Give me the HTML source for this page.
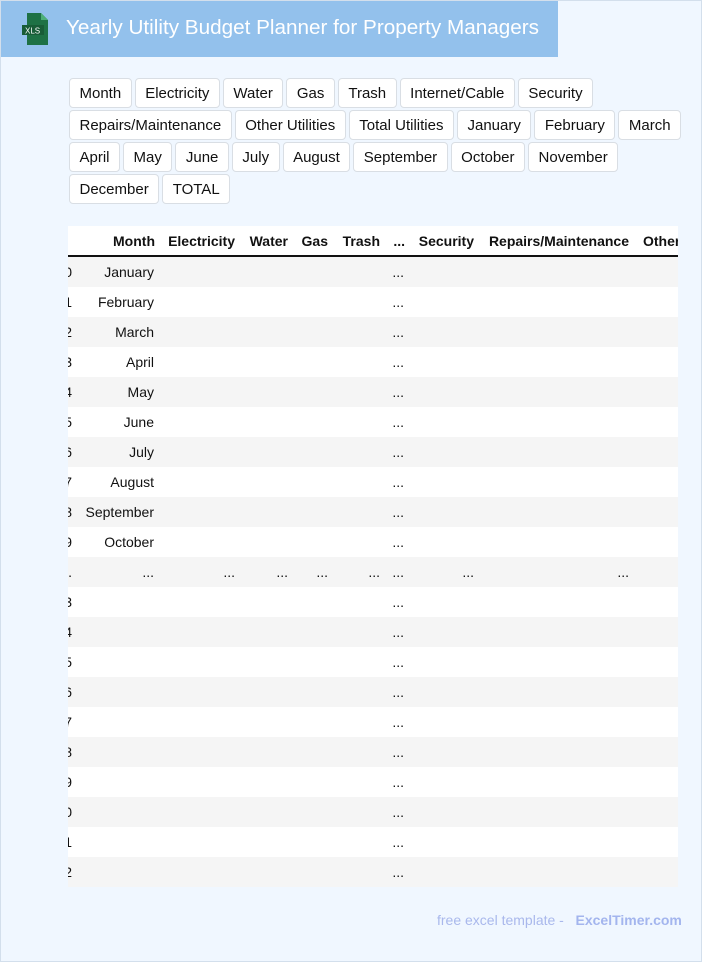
<!DOCTYPE html>
<html><head><meta charset="utf-8"><style>
*{box-sizing:border-box;margin:0;padding:0}
body{width:702px;height:962px;background:#f0f7ff;font-family:"Liberation Sans",Arial,sans-serif;position:relative;overflow:hidden}
.bd{position:absolute;left:0;top:0;width:702px;height:962px;border:1px solid #d3dfec;pointer-events:none}
.hdr{position:absolute;left:0;top:0;width:558px;height:57px;background:#93c1ec}
.hdr h1{position:absolute;left:66px;top:16px;font-size:20.7px;font-weight:normal;color:#fff;white-space:nowrap}
.pills{position:absolute;left:69px;top:78px;width:620px;display:flex;flex-wrap:wrap;gap:2px 3px}
.pill{height:30px;line-height:29px;padding:0 9.5px;border:1px solid #d9dee4;border-radius:4px;background:#fff;font-size:15px;color:#111}
.tbl{position:absolute;left:68px;top:226px;width:610px;height:661px;overflow:hidden;background:#fff}
.row{position:absolute;left:0;width:610px;height:30px;font-size:14px;color:#111}
.row span{position:absolute;top:7px;white-space:nowrap}
.g{background:#f5f5f5}
.h{top:0;height:31px;border-bottom:2px solid #111;font-weight:bold;background:#fff}
.h span{top:7px}
</style></head><body>
<div class="hdr">
<svg style="position:absolute;left:22px;top:13px" width="28" height="32" viewBox="0 0 28 32"><path d="M5 0h14l7 7v25H5z" fill="#1e7145"/><path d="M19 0v7h7z" fill="#4caf78"/><rect x="0" y="12" width="22" height="10" fill="#185c37"/><text x="3" y="20.5" font-size="8" fill="#fff" font-family="Liberation Sans">XLS</text></svg>
<h1>Yearly Utility Budget Planner for Property Managers</h1></div>
<div class="pills">
<div class="pill">Month</div><div class="pill">Electricity</div><div class="pill">Water</div><div class="pill">Gas</div><div class="pill">Trash</div><div class="pill">Internet/Cable</div><div class="pill">Security</div><div class="pill">Repairs/Maintenance</div><div class="pill">Other Utilities</div><div class="pill">Total Utilities</div><div class="pill">January</div><div class="pill">February</div><div class="pill">March</div><div class="pill">April</div><div class="pill">May</div><div class="pill">June</div><div class="pill">July</div><div class="pill">August</div><div class="pill">September</div><div class="pill">October</div><div class="pill">November</div><div class="pill">December</div><div class="pill">TOTAL</div>
</div>
<div class="tbl" id="t">
<div class="row h"><span style="right:523px">Month</span><span style="right:443px">Electricity</span><span style="right:390px">Water</span><span style="right:350px">Gas</span><span style="right:298px">Trash</span><span style="right:273px">...</span><span style="right:204px">Security</span><span style="right:49px">Repairs/Maintenance</span><span style="left:575px">Other Utilities</span></div>
<div class="row g" style="top:31px"><span style="right:606px">0</span><span style="right:524px">January</span><span style="right:274px">...</span></div>
<div class="row" style="top:61px"><span style="right:606px">1</span><span style="right:524px">February</span><span style="right:274px">...</span></div>
<div class="row g" style="top:91px"><span style="right:606px">2</span><span style="right:524px">March</span><span style="right:274px">...</span></div>
<div class="row" style="top:121px"><span style="right:606px">3</span><span style="right:524px">April</span><span style="right:274px">...</span></div>
<div class="row g" style="top:151px"><span style="right:606px">4</span><span style="right:524px">May</span><span style="right:274px">...</span></div>
<div class="row" style="top:181px"><span style="right:606px">5</span><span style="right:524px">June</span><span style="right:274px">...</span></div>
<div class="row g" style="top:211px"><span style="right:606px">6</span><span style="right:524px">July</span><span style="right:274px">...</span></div>
<div class="row" style="top:241px"><span style="right:606px">7</span><span style="right:524px">August</span><span style="right:274px">...</span></div>
<div class="row g" style="top:271px"><span style="right:606px">8</span><span style="right:524px">September</span><span style="right:274px">...</span></div>
<div class="row" style="top:301px"><span style="right:606px">9</span><span style="right:524px">October</span><span style="right:274px">...</span></div>
<div class="row g" style="top:331px"><span style="right:606px">...</span><span style="right:524px">...</span><span style="right:443px">...</span><span style="right:390px">...</span><span style="right:350px">...</span><span style="right:298px">...</span><span style="right:274px">...</span><span style="right:204px">...</span><span style="right:49px">...</span></div>
<div class="row" style="top:361px"><span style="right:606px">13</span><span style="right:274px">...</span></div>
<div class="row g" style="top:391px"><span style="right:606px">14</span><span style="right:274px">...</span></div>
<div class="row" style="top:421px"><span style="right:606px">15</span><span style="right:274px">...</span></div>
<div class="row g" style="top:451px"><span style="right:606px">16</span><span style="right:274px">...</span></div>
<div class="row" style="top:481px"><span style="right:606px">17</span><span style="right:274px">...</span></div>
<div class="row g" style="top:511px"><span style="right:606px">18</span><span style="right:274px">...</span></div>
<div class="row" style="top:541px"><span style="right:606px">19</span><span style="right:274px">...</span></div>
<div class="row g" style="top:571px"><span style="right:606px">20</span><span style="right:274px">...</span></div>
<div class="row" style="top:601px"><span style="right:606px">21</span><span style="right:274px">...</span></div>
<div class="row g" style="top:631px"><span style="right:606px">22</span><span style="right:274px">...</span></div>
</div>
<div style="position:absolute;left:437px;top:912px;font-size:14px;color:#a9b8ec;white-space:nowrap">free excel template - &nbsp;&nbsp;<b style="color:#a3b5ee">ExcelTimer.com</b></div>
<div class="bd"></div>
</body></html>
